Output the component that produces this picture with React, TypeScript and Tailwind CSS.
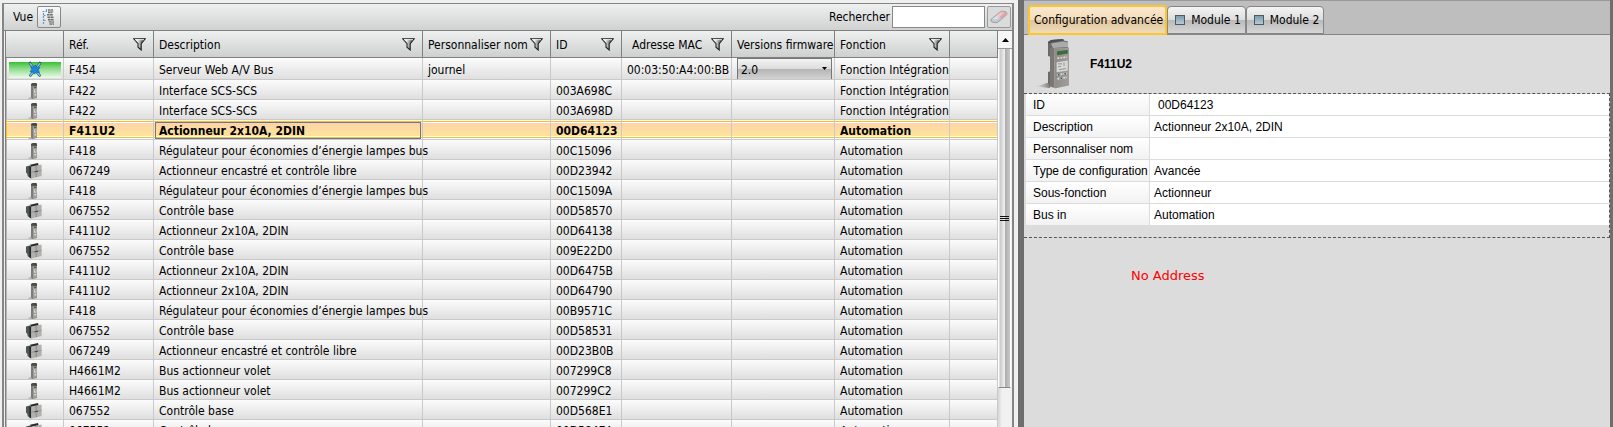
import type { ReactNode } from "react";

type Kind = "server" | "din" | "block";

type Device = {
  kind: Kind;
  ref: string;
  description: string;
  name?: string;
  id?: string;
  mac?: string;
  firmware?: string;
  role: string;
  selected?: boolean;
};

const devices: Device[] = [
  { kind: "server", ref: "F454", description: "Serveur Web A/V Bus", name: "journel", mac: "00:03:50:A4:00:BB", firmware: "2.0", role: "Fonction Intégration" },
  { kind: "din", ref: "F422", description: "Interface SCS-SCS", id: "003A698C", role: "Fonction Intégration" },
  { kind: "din", ref: "F422", description: "Interface SCS-SCS", id: "003A698D", role: "Fonction Intégration" },
  { kind: "din", ref: "F411U2", description: "Actionneur 2x10A, 2DIN", id: "00D64123", role: "Automation", selected: true },
  { kind: "din", ref: "F418", description: "Régulateur pour économies d’énergie lampes bus", id: "00C15096", role: "Automation" },
  { kind: "block", ref: "067249", description: "Actionneur encastré et contrôle libre", id: "00D23942", role: "Automation" },
  { kind: "din", ref: "F418", description: "Régulateur pour économies d’énergie lampes bus", id: "00C1509A", role: "Automation" },
  { kind: "block", ref: "067552", description: "Contrôle base", id: "00D58570", role: "Automation" },
  { kind: "din", ref: "F411U2", description: "Actionneur 2x10A, 2DIN", id: "00D64138", role: "Automation" },
  { kind: "block", ref: "067552", description: "Contrôle base", id: "009E22D0", role: "Automation" },
  { kind: "din", ref: "F411U2", description: "Actionneur 2x10A, 2DIN", id: "00D6475B", role: "Automation" },
  { kind: "din", ref: "F411U2", description: "Actionneur 2x10A, 2DIN", id: "00D64790", role: "Automation" },
  { kind: "din", ref: "F418", description: "Régulateur pour économies d’énergie lampes bus", id: "00B9571C", role: "Automation" },
  { kind: "block", ref: "067552", description: "Contrôle base", id: "00D58531", role: "Automation" },
  { kind: "block", ref: "067249", description: "Actionneur encastré et contrôle libre", id: "00D23B0B", role: "Automation" },
  { kind: "din", ref: "H4661M2", description: "Bus actionneur volet", id: "007299C8", role: "Automation" },
  { kind: "din", ref: "H4661M2", description: "Bus actionneur volet", id: "007299C2", role: "Automation" },
  { kind: "block", ref: "067552", description: "Contrôle base", id: "00D568E1", role: "Automation" },
  { kind: "block", ref: "067552", description: "Contrôle base", id: "00D5847A", role: "Automation" },
];

const details: [string, string][] = [
  ["ID", "00D64123"],
  ["Description", "Actionneur 2x10A, 2DIN"],
  ["Personnaliser nom", ""],
  ["Type de configuration", "Avancée"],
  ["Sous-fonction", "Actionneur"],
  ["Bus in", "Automation"],
];

function FunnelIcon() {
  return (
    <svg width="13" height="13" viewBox="0 0 13 13" aria-hidden="true">
      <defs>
        <linearGradient id="funnel" x1="0" x2="1">
          <stop offset="0.3" stopColor="#f4f4f4" />
          <stop offset="0.75" stopColor="#666" />
        </linearGradient>
      </defs>
      <path d="M0.8 0.8H12.2L8.2 5.6V12L5 9.2V5.6Z" fill="url(#funnel)" stroke="#222" strokeWidth="1.1" />
      <path d="M2 1.7H11" stroke="#fff" strokeWidth="0.9" />
    </svg>
  );
}

function DinIcon() {
  return (
    <svg width="12" height="16" viewBox="0 0 12 16" aria-hidden="true">
      <path d="M0 15L4 13.8V16H1Z" fill="#b5b5b5" />
      <path d="M3 1L5 0H8L9 1V15L4 16L3 14Z" fill="#7c7b79" />
      <path d="M3 1L5 0H8L9 1V3L3 2.6Z" fill="#4a4a4a" />
      <path d="M5 3.4H9V14.6L5 15.6Z" fill="#a19f9c" />
      <rect x="6" y="3.8" width="2.4" height="1.3" fill="#3e6d3a" />
      <rect x="6" y="6.6" width="2.4" height="3" fill="#d5d5d5" />
      <rect x="7" y="7.2" width="1" height="1.2" fill="#888" />
      <rect x="6.4" y="11" width="1.8" height="1.4" fill="#dcdcdc" />
    </svg>
  );
}

function BlockIcon() {
  return (
    <svg width="16" height="16" viewBox="0 0 16 16" aria-hidden="true">
      <path d="M0 3.4L4 2.4V14.6L1.6 13.2L1.4 11L0 9.6Z" fill="#4c5558" />
      <path d="M4 1.8L12 0L12.6 2.4L5 4Z" fill="#2a2a2a" />
      <path d="M3.4 3L5.4 3.4V15.6L3.4 14.4Z" fill="#262626" />
      <path d="M5.4 3.4L15.6 1.6V13L5.4 15.4Z" fill="#b1b1af" />
      <path d="M10.2 2.6V14.2" stroke="#808080" strokeWidth="0.8" />
      <path d="M5.4 9.3L15.6 7.4" stroke="#8d8d8b" strokeWidth="0.7" />
      <path d="M8.6 8.8L12 8.1" stroke="#333" strokeWidth="0.9" />
    </svg>
  );
}

function ServerIcon() {
  return (
    <svg width="14" height="17" viewBox="0 0 14 17" aria-hidden="true">
      <path d="M2 2.4L11.6 14.4M12 2.4L2.4 14.4" stroke="#2f5d88" strokeWidth="2.6" strokeLinecap="round" />
      <path d="M2 2.4L11.6 14.4M12 2.4L2.4 14.4" stroke="#8fcdf0" strokeWidth="1.2" strokeLinecap="round" />
      <path d="M7 4L9 6L12 6.4L10.4 8.8L11.4 11.6L8.4 11.2L6.4 13L5 11.2L2 10.6L3.8 8.4L2.8 5.8L5.8 6Z" fill="#1a86dc" stroke="#0d5ba6" strokeWidth="0.6" />
      <path d="M1 1.6L3 1M11.2 1L13.2 1.8" stroke="#444" strokeWidth="1" />
    </svg>
  );
}

function ViewIcon() {
  return (
    <svg width="16" height="16" viewBox="0 0 16 16" aria-hidden="true">
      <path d="M5.5 0V3M2.5 4V15M1.5 2.5H6M2.5 6.5H5M2.5 11.5H5" stroke="#5f9cc6" strokeWidth="1.2" strokeDasharray="2 1" fill="none" />
      <path d="M7 1H12M7 3.4H11.5M6 5.8H12M6.5 8.2H13M7 10.6H12.5M8 13H13M8.5 15H13" stroke="#6d7070" strokeWidth="1.6" strokeDasharray="2.6 0.5" />
      <path d="M7 2.2H12.5M6.5 7H12M7 11.8H13M8 14H13" stroke="#a3a5a5" strokeWidth="1.2" />
    </svg>
  );
}

function EraserIcon() {
  return (
    <svg width="18" height="14" viewBox="0 0 18 14" aria-hidden="true">
      <path d="M1 9.4L10 2Q11.4 0.9 13 1.2L16 1.9Q17.6 2.6 16.8 4.6L8 12Q6.8 13 5 12.6L2 12Q0.4 11.2 1 9.4Z" fill="#c3cad6" stroke="#8d8f98" strokeWidth="0.8" />
      <path d="M5.6 5.7L10 2Q11.4 0.9 13 1.2L16 1.9Q17.6 2.6 16.8 4.6L12.2 8.4Z" fill="#dda5a5" />
      <path d="M2 8.9L10.4 2.4L14.6 2.6L6.6 9.6Z" fill="#fff" opacity="0.4" />
    </svg>
  );
}

function DevicePicture() {
  return (
    <svg width="36" height="50" viewBox="0 0 36 50" aria-hidden="true">
      <defs>
        <linearGradient id="body" x1="0" x2="1">
          <stop offset="0" stopColor="#8f8c88" />
          <stop offset="1" stopColor="#a19e9a" />
        </linearGradient>
        <linearGradient id="shade" x1="0" x2="1">
          <stop offset="0" stopColor="#999" stopOpacity="0" />
          <stop offset="1" stopColor="#777" />
        </linearGradient>
      </defs>
      <path d="M0 47.6L14 43V49Z" fill="url(#shade)" />
      <path d="M12 3L15 1L27 0L28 1.6L32 2.4V9L13 10Z" fill="#6d6e70" />
      <path d="M15 4.4L27 2.6L32 3.4V8L17 9Z" fill="#a9abad" />
      <path d="M12 3L15 1L27 0L28 1.6L15 3.6V9L12 17Z" fill="#4e4f51" />
      <path d="M12 4H15V18L12 17ZM12 33L15 32V48L12 44Z" fill="#6c6a68" />
      <path d="M14 9L18.6 9.4V49L14 47.6Z" fill="#7a7774" />
      <path d="M18.6 9.6L33 8.4V46.4L18.6 49.4Z" fill="url(#body)" />
      <path d="M21 12.4L31.6 11V14.6L21 16.2Z" fill="#56604f" />
      <path d="M22.6 12V15.8M25.4 11.8V15.4M28 11.4V15M30.6 11V14.8" stroke="#237a2a" strokeWidth="1.3" />
      <path d="M21.4 19.2L31 18" stroke="#e8e8e8" strokeWidth="1.4" strokeDasharray="1.8 1.2" />
      <path d="M20.6 23.2L31.8 21.6V31.4L20.6 33.2Z" fill="#d6d6d3" />
      <path d="M22 24.8H26M22 27.8L25 27.2M23 30.6L30 29.6M28 23.6V27" stroke="#85878b" strokeWidth="0.8" />
      <path d="M21.4 35.8L31 34.4M21.4 39.8L31 38.4" stroke="#d8d8d6" strokeWidth="1.8" strokeDasharray="2 1" />
      <path d="M22 35.6H23.4M24.6 39.2H26M28.4 34.8H29.8" stroke="#24567f" strokeWidth="1.6" />
    </svg>
  );
}

function KindCell({ kind }: { kind: Kind }) {
  if (kind === "server") {
    return (
      <div className="flex h-4 items-center justify-center bg-linear-to-b from-[#2fc12f] to-[#eefbee]">
        <ServerIcon />
      </div>
    );
  }
  return <div className="flex justify-center pr-[2px]">{kind === "din" ? <DinIcon /> : <BlockIcon />}</div>;
}

function HeadCell({ label, filter = false, pad = "pl-[5px]" }: { label?: string; filter?: boolean; pad?: string }) {
  return (
    <th scope="col" className={`h-[27px] border-r border-b border-[#808080] bg-linear-to-b from-[#eff1f1] to-[#ced0d0] pt-px pr-[7px] text-left font-normal ${pad}`}>
      <div className="flex items-center justify-between">
        <span>{label}</span>
        {filter && (
          <button type="button" aria-label={`Filtrer ${label}`}>
            <FunnelIcon />
          </button>
        )}
      </div>
    </th>
  );
}

function Cell({ selected, pad = "pt-[2px] pl-[5px]", className = "", children }: { selected?: boolean; pad?: string; className?: string; children?: ReactNode }) {
  const look = selected
    ? "bg-[linear-gradient(#f8f8f8_0_1px,#f5c030_1px_2px,#fff_2px_3px,#fdd3a8_3px,#fde49a_16px,#fff_16px_17px,#f5c030_17px_18px,#fff_18px)]"
    : "bg-linear-to-b from-[#fcfcfc] to-[#dfdfdf]";
  return <td className={`border-r border-b border-[#c9c9c9] ${pad} ${look} ${className}`}>{children}</td>;
}

function DeviceRow({ device }: { device: Device }) {
  const { selected } = device;
  return (
    <tr className={device.kind === "server" ? "h-[22px]" : selected ? "h-5 font-bold" : "h-5"}>
      <Cell selected={selected} pad="pt-[2px] px-[2px]" className={selected ? "border-l border-l-[#f5c030]" : "border-l border-l-[#b4b4b4]"}>
        <KindCell kind={device.kind} />
      </Cell>
      <Cell selected={selected}>{device.ref}</Cell>
      {selected ? (
        <Cell selected pad="pt-px px-px">
          <div className="h-[17px] border border-[#777] pl-[3px] leading-4">{device.description}</div>
        </Cell>
      ) : (
        <Cell>{device.description}</Cell>
      )}
      <Cell selected={selected}>{device.name}</Cell>
      <Cell selected={selected}>{device.id}</Cell>
      <Cell selected={selected}>{device.mac}</Cell>
      <Cell selected={selected} pad={device.firmware ? "pl-[5px] pr-[2px]" : undefined}>
        {device.firmware && (
          <div className="relative">
            <select
              aria-label="Versions firmware"
              defaultValue={device.firmware}
              className="block h-[21px] w-full appearance-none border-x border-t border-[#777] bg-[linear-gradient(#f4f4f4,#dcdcdc_50%,#b4b4b4_50%,#d2d2d2)] pt-px pl-[3px] outline-none"
            >
              <option>{device.firmware}</option>
            </select>
            <svg className="pointer-events-none absolute top-[9px] right-[5px]" width="5" height="3" viewBox="0 0 5 3" aria-hidden="true">
              <path d="M0 0H5L2.5 3Z" fill="#000" />
            </svg>
          </div>
        )}
      </Cell>
      <Cell selected={selected}>{device.role}</Cell>
      <Cell selected={selected} />
    </tr>
  );
}

function Scrollbar() {
  return (
    <div className="flex w-[14px] shrink-0 flex-col bg-linear-to-r from-[#d6d6d6] to-[#f1f1f1] to-30%" aria-hidden="true">
      <div className="flex h-[18px] items-center justify-center border-b border-[#999] bg-[#f6f6f6]">
        <svg width="7" height="4" viewBox="0 0 7 4">
          <path d="M0 4H7L3.5 0Z" fill="#000" />
        </svg>
      </div>
      <div className="mr-px flex h-[339px] flex-col items-center justify-center gap-px border-x border-b border-[#fff] border-b-[#888] bg-[linear-gradient(to_right,#fff,#c8c8c8_8%,#eee_50%,#a9a9a9_50%,#c8c8c8)]">
        <span className="h-px w-[9px] bg-[#111]" />
        <span className="h-px w-[9px] bg-[#111]" />
        <span className="h-px w-[9px] bg-[#111]" />
      </div>
    </div>
  );
}

function DeviceList() {
  return (
    <section className="min-w-0 bg-[#f0f0f0] pt-[3px] pr-1 pl-[2px]">
      <div className="flex h-full flex-col border-t border-r-2 border-l-2 border-[#858585]">
        <div className="flex h-[26px] shrink-0 items-center justify-between bg-linear-to-b from-[#eff1f1] to-[#d0d2d2] pr-px pl-[9px]">
          <div className="flex items-center gap-1">
            <span>Vue</span>
            <button type="button" aria-label="Changer de vue" className="flex h-[22px] w-6 items-center justify-center rounded-xs border border-[#888] bg-linear-to-b from-[#fafafa] to-[#d8d8d8]">
              <ViewIcon />
            </button>
          </div>
          <div className="flex items-center gap-[2px]">
            <label htmlFor="search">Rechercher</label>
            <input id="search" type="text" className="h-[22px] w-[93px] border border-[#888] bg-white px-1 outline-none" />
            <button type="button" aria-label="Effacer" className="flex h-[22px] w-6 items-center justify-center rounded-xs border border-[#999] bg-[#dadcdc]">
              <EraserIcon />
            </button>
          </div>
        </div>
        <div className="flex min-h-0 flex-1 overflow-hidden border-t border-[#808080] pl-px">
          <div className="min-w-0 flex-1 overflow-hidden border-l border-[#808080]">
            <table className="w-full table-fixed border-separate border-spacing-0 whitespace-nowrap">
              <colgroup>
                <col className="w-[58px]" />
                <col className="w-[90px]" />
                <col className="w-[269px]" />
                <col className="w-[128px]" />
                <col className="w-[71px]" />
                <col className="w-[110px]" />
                <col className="w-[103px]" />
                <col className="w-[115px]" />
                <col />
              </colgroup>
              <thead>
                <tr>
                  <HeadCell />
                  <HeadCell label="Réf." filter />
                  <HeadCell label="Description" filter />
                  <HeadCell label="Personnaliser nom" filter />
                  <HeadCell label="ID" filter />
                  <HeadCell label="Adresse MAC" filter pad="pl-[10px]" />
                  <HeadCell label="Versions firmware" />
                  <HeadCell label="Fonction" filter />
                  <HeadCell />
                </tr>
              </thead>
              <tbody>
                {devices.map((device, index) => (
                  <DeviceRow key={index} device={device} />
                ))}
              </tbody>
            </table>
          </div>
          <Scrollbar />
        </div>
      </div>
    </section>
  );
}

function ModuleTab({ label }: { label: string }) {
  return (
    <button
      type="button"
      role="tab"
      aria-selected="false"
      className="flex h-7 items-center gap-[6px] rounded-t border border-[#858585] bg-[linear-gradient(#f4f4f4,#dcdcdc_50%,#b9b9b9_50%,#d6d6d6)] pr-1 pl-[7px] whitespace-nowrap"
    >
      <span className="size-[10px] border border-[#4d5a62] bg-linear-to-b from-[#7f9cab] to-[#b4ccd8]" />
      {label}
    </button>
  );
}

function DetailPanel() {
  return (
    <section className="min-w-0 border-r-[3px] border-l-[6px] border-[#6e6e6e] bg-[#dcdcdc] font-['Liberation_Sans',Arial,sans-serif]">
      <div role="tablist" className="flex h-[35px] items-end border-t border-b border-t-[#999] border-b-[#858585] bg-[#bebebe] pl-1 font-['DejaVu_Sans_Condensed','Noto_Sans',sans-serif]">
        <button
          type="button"
          role="tab"
          aria-selected="true"
          className="-mb-px flex h-[30px] items-center rounded-t border-2 border-[#fcc52c] bg-[linear-gradient(#fbe8cf,#f3dcba_50%,#ddc49c_50%,#f0dcba)] pr-[2px] pl-1 whitespace-nowrap"
        >
          Configuration advancée
        </button>
        <ModuleTab label="Module 1" />
        <ModuleTab label="Module 2" />
      </div>
      <div className="flex h-[58px] items-center gap-[18px] pl-3">
        <DevicePicture />
        <h1 className="text-xs font-bold">F411U2</h1>
      </div>
      <div className="border-y border-r border-dashed border-[#555] pb-[11px] pl-[2px]">
        <table className="w-full table-fixed border-separate border-spacing-0 whitespace-nowrap">
          <colgroup>
            <col className="w-[124px]" />
            <col />
          </colgroup>
          <tbody>
            {details.map(([label, value]) => (
              <tr key={label} className="h-[22px]">
                <th scope="row" className="border-r border-b border-[#dcdcdc] bg-linear-to-b from-white to-[#f2f2f2] p-0 pl-[7px] text-left font-normal">
                  {label}
                </th>
                <td className={`border-b border-[#dcdcdc] bg-white ${label === "ID" ? "pl-2" : "pl-1"}`}>{value}</td>
              </tr>
            ))}
          </tbody>
        </table>
      </div>
      <p className="pt-[30px] pl-[107px] font-['DejaVu_Sans',sans-serif] text-[13px] leading-4 text-[#ff0000]">No Address</p>
    </section>
  );
}

export default function App() {
  return (
    <main className="grid h-screen grid-cols-[minmax(0,1018fr)_minmax(0,595fr)] overflow-hidden bg-[#f0f0f0] font-['DejaVu_Sans_Condensed','Noto_Sans',sans-serif] text-xs leading-4 text-black">
      <DeviceList />
      <DetailPanel />
    </main>
  );
}
